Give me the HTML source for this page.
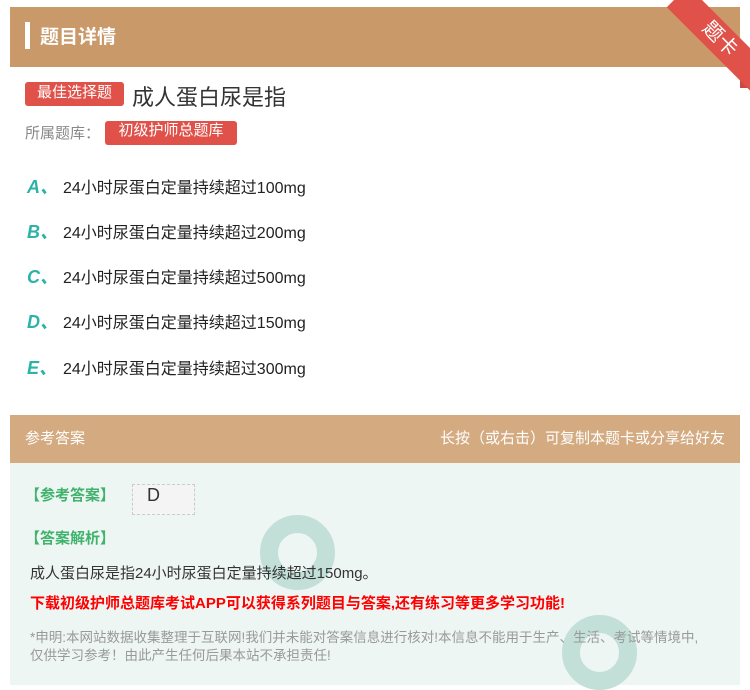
<!DOCTYPE html>
<html><head><meta charset="utf-8"><style>
*{margin:0;padding:0;box-sizing:border-box}
body{width:750px;height:685px;background:#fff;font-family:"Liberation Sans","Noto Sans CJK SC",sans-serif;position:relative;overflow:hidden}
.a{position:absolute;white-space:nowrap}
.badge{background:#e0514a;color:#fff;border-radius:3px;font-size:15px;text-align:center}
.opt{font-size:16px;color:#222}
.opt b{color:#2bb3a8;font-style:italic;font-size:18px;display:inline-block;width:36px}
</style></head><body>
<div class="a" style="left:10px;top:7px;width:730px;height:60px;background:#c9996a"></div>
<div class="a" style="left:25px;top:22px;width:5px;height:27px;background:#fff"></div>
<div class="a" style="left:40px;top:22px;font-size:19px;font-weight:bold;color:#fff">题目详情</div>
<div class="a" style="left:740px;top:60px;width:10px;height:28px;background:#c94a40"></div>
<div class="a" style="left:688px;top:-14px;width:120px;height:30px;background:#e0514a;transform:rotate(45deg);transform-origin:0 0;color:#fff;font-size:20px;text-align:center;line-height:30px">题卡</div>
<div class="a badge" style="left:25px;top:82px;width:99px;height:24px;line-height:22px">最佳选择题</div>
<div class="a" style="left:132px;top:80px;font-size:22px;color:#333">成人蛋白尿是指</div>
<div class="a" style="left:25px;top:122px;font-size:15px;color:#888">所属题库：</div>
<div class="a badge" style="left:105px;top:121px;width:132px;height:24px;line-height:20px">初级护师总题库</div>
<div class="a opt" style="left:27px;top:173px"><b>A、</b>24小时尿蛋白定量持续超过100mg</div>
<div class="a opt" style="left:27px;top:218px"><b>B、</b>24小时尿蛋白定量持续超过200mg</div>
<div class="a opt" style="left:27px;top:263px"><b>C、</b>24小时尿蛋白定量持续超过500mg</div>
<div class="a opt" style="left:27px;top:308px"><b>D、</b>24小时尿蛋白定量持续超过150mg</div>
<div class="a opt" style="left:27px;top:354px"><b>E、</b>24小时尿蛋白定量持续超过300mg</div>
<div class="a" style="left:10px;top:415px;width:730px;height:48px;background:#d4aa80"></div>
<div class="a" style="left:25px;top:427px;font-size:15px;color:#fff">参考答案</div>
<div class="a" style="right:25px;top:427px;font-size:15px;color:#fff">长按（或右击）可复制本题卡或分享给好友</div>
<div class="a" style="left:10px;top:463px;width:730px;height:222px;background:#eef6f4"></div>
<div class="a" style="left:260px;top:515px;width:75px;height:75px;border-radius:50%;border:18px solid #c3e0d8"></div>
<div class="a" style="left:562px;top:615px;width:75px;height:75px;border-radius:50%;border:18px solid #c3e0d8"></div>
<div class="a" style="left:25px;top:484px;font-size:15px;font-weight:bold;color:#3fb26b">【参考答案】</div>
<div class="a" style="left:132px;top:484px;width:63px;height:31px;background:#f4f4f4;border:1px dashed #ccc;font-size:18px;color:#333;padding-left:14px">D</div>
<div class="a" style="left:25px;top:527px;font-size:15px;font-weight:bold;color:#3fb26b">【答案解析】</div>
<div class="a" style="left:30px;top:562px;font-size:15px;color:#333">成人蛋白尿是指24小时尿蛋白定量持续超过150mg。</div>
<div class="a" style="left:30px;top:592px;font-size:15px;font-weight:bold;color:#f00">下载初级护师总题库考试APP可以获得系列题目与答案,还有练习等更多学习功能!</div>
<div class="a" style="left:30px;top:629px;font-size:13.5px;color:#999;line-height:18px;white-space:normal;width:680px">*申明:本网站数据收集整理于互联网!我们并未能对答案信息进行核对!本信息不能用于生产、生活、考试等情境中,仅供学习参考！由此产生任何后果本站不承担责任!</div>
</body></html>
